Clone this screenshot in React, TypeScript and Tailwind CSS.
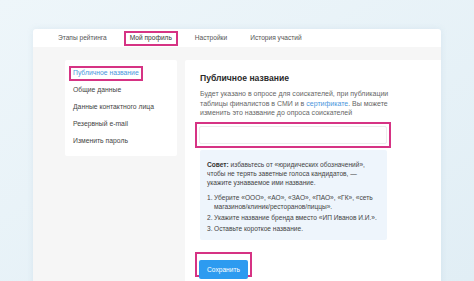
const tabs = ["Этапы рейтинга", "Мой профиль", "Настройки", "История участий"]

const menu = [
  "Публичное название",
  "Общие данные",
  "Данные контактного лица",
  "Резервный e-mail",
  "Изменить пароль",
]

export default function App() {
  return (
    <div
      className="w-[474px] h-[281px] overflow-hidden bg-linear-to-br from-[#eef6fa] to-[#e1eef5] pt-[29px] pl-[33px]"
      style={{ fontFamily: '"Liberation Sans", Arial, sans-serif' }}
    >
      <div className="w-[408px] bg-white rounded-t-[3px] shadow-[0_0_6px_rgba(120,160,190,0.15)]">
        {/* tabs */}
        <div className="h-[18px] flex items-center pl-[19px] gap-[11px] text-[6.6px] text-[#555]">
          {tabs.map((t, i) => (
            <div
              key={t}
              className={
                "h-[15px] px-[4px] flex items-center border-2 " +
                (i === 1 ? "border-[#d63384] text-[#333]" : "border-transparent")
              }
            >
              {t}
            </div>
          ))}
        </div>

        <div className="bg-[#f6f6f6] pt-[13px] pl-[32px] flex gap-[8px] h-[240px]">
          {/* sidebar */}
          <div className="w-[112px] h-[96px] bg-white rounded-[2px] pt-[6px] pl-[4px] flex flex-col gap-[2px] text-[6.8px] text-[#444]">
            {menu.map((m, i) => (
              <div key={m} className="flex">
                <div
                  className={
                    "h-[15px] px-[2px] flex items-center border-2 " +
                    (i === 0 ? "border-[#d63384] text-[#4a95dc]" : "border-transparent")
                  }
                >
                  {m}
                </div>
              </div>
            ))}
          </div>

          {/* main */}
          <div className="flex-1 bg-white rounded-tl-[2px] pt-[12px] pl-[15px]">
            <h2 className="text-[8.6px] leading-[12px] font-bold text-[#2a2a2a]">Публичное название</h2>
            <p className="mt-[5px] w-[190px] text-[7px] leading-[9.5px] text-[#666]">
              Будет указано в опросе для соискателей, при публикации таблицы финалистов в СМИ и в{" "}
              <span className="text-[#4a95dc]">сертификате</span>. Вы можете изменить это название до
              опроса соискателей
            </p>

            <div className="mt-[4px] -ml-[5px] w-[196px] border-2 border-[#d63384] p-[2px]">
              <div className="h-[18px] bg-white border border-[#ededed] rounded-[2px]" />
            </div>

            <div className="mt-[2px] w-[187px] bg-[#eef5fc] rounded-[2px] pt-[10px] pb-[7px] px-[7px] text-[6.6px] leading-[9px] text-[#444]">
              <p className="w-[160px]">
                <span className="font-bold text-[#333]">Совет:</span> избавьтесь от «юридических обозначений»,
                чтобы не терять заветные голоса кандидатов, — укажите узнаваемое ими название.
              </p>
              <ol className="mt-[6px] flex flex-col gap-[2px]">
                <li className="flex">
                  <span className="w-[7px] shrink-0">1.</span>
                  <span>Уберите «ООО», «АО», «ЗАО», «ПАО», «ГК», «сеть магазинов/клиник/ресторанов/пиццы».</span>
                </li>
                <li className="flex">
                  <span className="w-[7px] shrink-0">2.</span>
                  <span>Укажите название бренда вместо «ИП Иванов И.И.».</span>
                </li>
                <li className="flex">
                  <span className="w-[7px] shrink-0">3.</span>
                  <span>Оставьте короткое название.</span>
                </li>
              </ol>
            </div>

            <div className="mt-[12px] -ml-[5px] w-[57px] h-[25px] border-2 border-[#d63384] p-[1px]">
              <button className="ml-[1px] w-[49px] h-[19px] bg-[#2d9bf0] rounded-[2px] text-white text-[6.6px]">
                Сохранить
              </button>
            </div>
          </div>
        </div>
      </div>
    </div>
  )
}
